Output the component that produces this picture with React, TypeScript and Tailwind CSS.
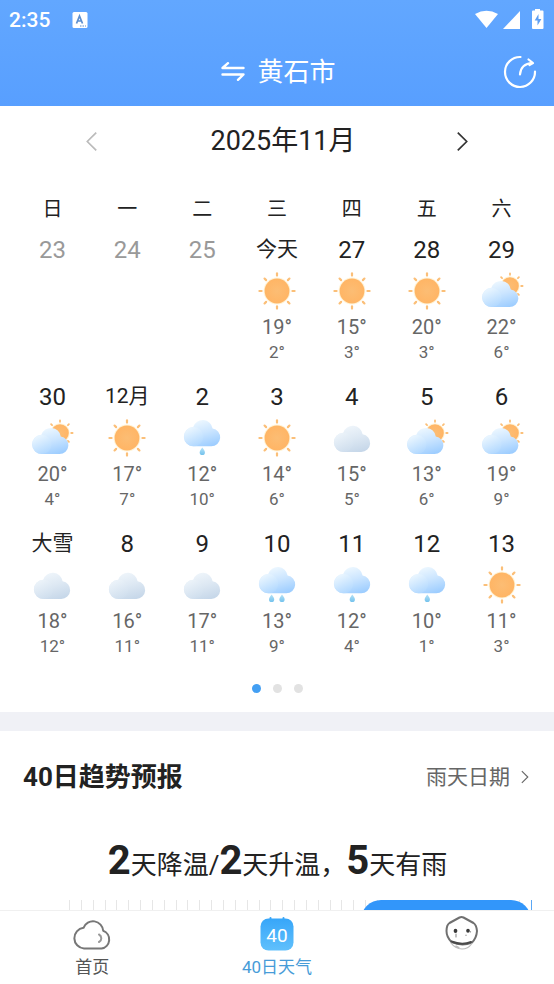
import { useState } from "react";

type Weather = "sunny" | "partly" | "cloudy" | "rain" | "heavyRain";

interface Day {
  label: string;
  small?: boolean;
  weather?: Weather;
  high?: number;
  low?: number;
}

const weekdays = ["日", "一", "二", "三", "四", "五", "六"];

const days: Day[] = [
  { label: "23" },
  { label: "24" },
  { label: "25" },
  { label: "今天", small: true, weather: "sunny", high: 19, low: 2 },
  { label: "27", weather: "sunny", high: 15, low: 3 },
  { label: "28", weather: "sunny", high: 20, low: 3 },
  { label: "29", weather: "partly", high: 22, low: 6 },
  { label: "30", weather: "partly", high: 20, low: 4 },
  { label: "12月", small: true, weather: "sunny", high: 17, low: 7 },
  { label: "2", weather: "rain", high: 12, low: 10 },
  { label: "3", weather: "sunny", high: 14, low: 6 },
  { label: "4", weather: "cloudy", high: 15, low: 5 },
  { label: "5", weather: "partly", high: 13, low: 6 },
  { label: "6", weather: "partly", high: 19, low: 9 },
  { label: "大雪", small: true, weather: "cloudy", high: 18, low: 12 },
  { label: "8", weather: "cloudy", high: 16, low: 11 },
  { label: "9", weather: "cloudy", high: 17, low: 11 },
  { label: "10", weather: "heavyRain", high: 13, low: 9 },
  { label: "11", weather: "rain", high: 12, low: 4 },
  { label: "12", weather: "rain", high: 10, low: 1 },
  { label: "13", weather: "sunny", high: 11, low: 3 },
];

const weeks = [days.slice(0, 7), days.slice(7, 14), days.slice(14, 21)];

function Gradients() {
  return (
    <svg width="0" height="0" className="absolute" aria-hidden="true">
      <defs>
        <radialGradient id="sun">
          <stop offset="0" stopColor="#fcbd74" />
          <stop offset="1" stopColor="#ffb565" />
        </radialGradient>
        <linearGradient id="blue" x1="0.3" y1="0" x2="0.7" y2="1">
          <stop offset="0" stopColor="#f0f9ff" />
          <stop offset="0.5" stopColor="#cbe5ff" />
          <stop offset="1" stopColor="#9dcdff" />
        </linearGradient>
        <linearGradient id="bluePuff" x1="0.1" y1="0" x2="0.6" y2="1">
          <stop offset="0" stopColor="#f2faff" />
          <stop offset="1" stopColor="#b4daff" stopOpacity="0.7" />
        </linearGradient>
        <linearGradient id="gray" x1="0.3" y1="0" x2="0.7" y2="1">
          <stop offset="0" stopColor="#f0f6fb" />
          <stop offset="0.5" stopColor="#dde8f3" />
          <stop offset="1" stopColor="#c6d7e9" />
        </linearGradient>
        <linearGradient id="grayPuff" x1="0.1" y1="0" x2="0.6" y2="1">
          <stop offset="0" stopColor="#f0f6fb" />
          <stop offset="1" stopColor="#d0dfee" stopOpacity="0.7" />
        </linearGradient>
        <linearGradient id="drop" x1="0" y1="0" x2="0" y2="1">
          <stop offset="0" stopColor="#b5e2f8" />
          <stop offset="1" stopColor="#74c2ec" />
        </linearGradient>
        <linearGradient id="badge" x1="0" y1="0" x2="0" y2="1">
          <stop offset="0" stopColor="#37a6f9" />
          <stop offset="1" stopColor="#60c0fc" />
        </linearGradient>
      </defs>
    </svg>
  );
}

interface SunProps {
  cx: number;
  cy: number;
  r: number;
  inner: number;
  outer: number;
  width: number;
}

function Sun({ cx, cy, r, inner, outer, width }: SunProps) {
  return (
    <g>
      <circle cx={cx} cy={cy} r={r + 1} fill="#fff3d6" />
      <circle cx={cx} cy={cy} r={r} fill="url(#sun)" />
      {[0, 45, 90, 135, 180, 225, 270, 315].map((a) => (
        <line key={a} x1={cx + inner} x2={cx + outer} y1={cy} y2={cy} stroke="#fbbf78" strokeWidth={width} strokeLinecap="round" transform={`rotate(${a} ${cx} ${cy})`} />
      ))}
    </g>
  );
}

function Cloud({ x, y, tone }: { x: number; y: number; tone: "blue" | "gray" }) {
  return (
    <g transform={`translate(${x} ${y})`}>
      <path d="M9.8 26.500A9.600 9.600 0 0 1 9.200 7.200A10 10 0 0 1 28.600 8.800A8.900 8.900 0 0 1 27.300 26.500Z" fill={tone === "blue" ? "url(#blue)" : "url(#gray)"} />
      <circle cx="9.7" cy="16.9" r="9.6" fill={tone === "blue" ? "url(#bluePuff)" : "url(#grayPuff)"} />
    </g>
  );
}

function Drop({ x }: { x: number }) {
  return <path d={`M${x} 29.5C${x + 1.6} 31.6 ${x + 2.6} 33 ${x + 2.6} 34.4A2.6 2.6 0 0 1 ${x - 2.6} 34.4C${x - 2.6} 33 ${x - 1.6} 31.6 ${x} 29.5Z`} fill="url(#drop)" />;
}

function WeatherIcon({ kind }: { kind: Weather }) {
  return (
    <svg width="44" height="40" viewBox="0 0 44 40" aria-hidden="true">
      {kind === "sunny" && <Sun cx={22} cy={20} r={12.4} inner={15.4} outer={17.6} width={2.2} />}
      {kind === "partly" && (
        <>
          <Sun cx={30} cy={15} r={8.8} inner={11.2} outer={12.6} width={1.8} />
          <Cloud x={2.2} y={9.6} tone="blue" />
        </>
      )}
      {kind === "cloudy" && <Cloud x={4} y={7.5} tone="gray" />}
      {(kind === "rain" || kind === "heavyRain") && <Cloud x={4} y={1.8} tone="blue" />}
      {kind === "rain" && <Drop x={22.3} />}
      {kind === "heavyRain" && (
        <>
          <Drop x={16.6} />
          <Drop x={27} />
        </>
      )}
    </svg>
  );
}

function StatusBar() {
  return (
    <div className="flex h-9 items-center justify-between pr-2 pl-[9px] pt-1">
      <div className="flex items-center gap-[22px] text-[21px] leading-7 font-medium">
        <span>2:35</span>
        <svg width="16" height="16" viewBox="0 0 16 16" aria-hidden="true">
          <rect x="0.5" y="0" width="15" height="16" rx="1.5" fill="#fff" />
          <path d="M4.5 11.5L7.5 4L10.5 11.5M5.6 9H9.4" fill="none" stroke="#5c8fd0" strokeWidth="1.7" />
          <path d="M8 14h6" stroke="#5c8fd0" strokeDasharray="1.5 1" />
        </svg>
      </div>
      <svg width="72" height="22" viewBox="0 0 72 22" fill="#fff" aria-hidden="true">
        <path d="M1 5Q12.500 -1.500 24 5L12.500 19Z" />
        <path d="M46 2V20H29Z" />
        <path d="M61 0h5v1.600h2.500q1 0 1 1V19q0 1-1 1h-9.500q-1 0-1-1V2.600q0-1 1-1H61Z" />
        <path d="M64.500 5L60.700 11.500H63.500V16.500L67.400 9.900H64.500Z" fill="#5f9ff2" />
      </svg>
    </div>
  );
}

function Header() {
  return (
    <header className="h-[106px] shrink-0 bg-linear-to-b from-[#62a7ff] to-[#589fff] text-white">
      <StatusBar />
      <div className="grid grid-cols-[1fr_auto_1fr] items-center px-4">
        <span />
        <button type="button" className="flex h-[72px] items-center gap-3 pl-[3px] text-[26px] leading-9">
          <svg width="24" height="20" viewBox="0 0 24 20" fill="none" stroke="#fff" strokeWidth="2.4" strokeLinecap="round" strokeLinejoin="round" aria-hidden="true">
            <path d="M22.500 6H1.500L7 1.200M1.500 12.500H22.500L17 17.800" />
          </svg>
          <span>黄石市</span>
        </button>
        <button type="button" aria-label="分享" className="justify-self-end">
          <svg width="36" height="36" viewBox="0 0 36 36" fill="none" stroke="#fff" strokeWidth="2.2" strokeLinecap="round" strokeLinejoin="round" aria-hidden="true">
            <path d="M18.500 3A15 15 0 1 0 33 17.500" />
            <path d="M18 20.500C18.500 13.500 22 9.500 30.500 9M26.500 5.500L31 9L27.500 11" />
          </svg>
        </button>
      </div>
    </header>
  );
}

function Chevron({ direction, size }: { direction: "left" | "right"; size: number }) {
  return (
    <svg width={size} height={size} viewBox="0 0 20 20" fill="none" stroke="currentColor" strokeWidth="1.600" aria-hidden="true">
      <path d={direction === "left" ? "M14.500 1.500L6 10L14.500 18.500" : "M5.500 1.500L14 10L5.500 18.500"} />
    </svg>
  );
}

function DayCell({ day }: { day: Day }) {
  return (
    <div className="flex h-[147px] flex-col items-center">
      <span className={`flex h-9 items-center ${day.small ? "text-[21px]" : "text-2xl"} ${day.weather ? "text-[#222]" : "text-[#999]"}`}>{day.label}</span>
      {day.weather && (
        <>
          <span className="mt-[3px] h-10">
            <WeatherIcon kind={day.weather} />
          </span>
          <span className="mt-1 text-xl leading-6 text-[#666]">{day.high}°</span>
          <span className="text-[17px] leading-[26px] text-[#666]">{day.low}°</span>
        </>
      )}
    </div>
  );
}

function Calendar() {
  const [page, setPage] = useState(0);
  return (
    <section className="bg-white px-[15px]">
      <div className="flex h-[70px] items-center justify-between px-[66px]">
        <button type="button" aria-label="上个月" className="text-[#bbb]">
          <Chevron direction="left" size={21} />
        </button>
        <h1 className="pl-3 text-[27px] leading-9 text-[#222]">2025年11月</h1>
        <button type="button" aria-label="下个月" className="text-[#333]">
          <Chevron direction="right" size={21} />
        </button>
      </div>
      <div className="grid grid-cols-7 pt-[17px] pb-[7px] text-center text-xl leading-8 text-[#222]">
        {weekdays.map((name) => (
          <span key={name}>{name}</span>
        ))}
      </div>
      {weeks.map((week, i) => (
        <div key={i} className="grid grid-cols-7">
          {week.map((day) => (
            <DayCell key={day.label} day={day} />
          ))}
        </div>
      ))}
      <div className="flex h-[39px] justify-center gap-3 pt-[11px]">
        {[0, 1, 2].map((n) => (
          <button key={n} type="button" aria-label={`第${n + 1}页`} onClick={() => setPage(n)} className={`size-[9px] rounded-full ${n === page ? "bg-[#439ff3]" : "bg-[#e2e2e2]"}`} />
        ))}
      </div>
    </section>
  );
}

function Trend() {
  return (
    <section className="bg-white pr-[22px] pl-[23px]">
      <div className="flex h-[92px] items-center justify-between">
        <h2 className="text-[26px] leading-9 font-bold text-[#222]">40日趋势预报</h2>
        <a href="#rain" className="flex items-center gap-2 text-[21px] leading-8 text-[#666]">
          雨天日期
          <Chevron direction="right" size={14} />
        </a>
      </div>
      <p className="flex h-[77px] items-baseline justify-center pt-3 text-[26px] leading-[52px] text-[#222]">
        <b className="text-[40px]">2</b>天降温/<b className="text-[40px]">2</b>天升温，<b className="text-[40px]">5</b>天有雨
      </p>
      <div className="relative ml-[46px] flex h-48 justify-between">
        {Array.from({ length: 40 }, (_, i) => (
          <span key={i} className={`w-px ${i === 39 ? "bg-[#5aa7f5]" : "bg-[#e6e6e6]"}`} />
        ))}
        <div className="absolute top-0 right-px h-11 w-[170px] rounded-[20px] bg-[#3296fa]" />
      </div>
    </section>
  );
}

function TabBar() {
  return (
    <nav className="grid h-[74px] shrink-0 grid-cols-3 border-t border-[#f0f0f0] bg-white text-[17px] leading-6 text-[#555]">
      <a href="#home" className="flex flex-col items-center pt-1">
        <svg width="40" height="40" viewBox="0 0 40 40" fill="none" strokeWidth="2" strokeLinecap="round" strokeLinejoin="round" aria-hidden="true">
          <path d="M12 33.500A10.400 10.400 0 0 1 11.500 12.800A10.200 10.200 0 0 1 31.200 15.800A9.200 9.200 0 0 1 29.500 33.500Z" stroke="#777" />
          <path d="M27 19.500A4.200 4.200 0 0 1 27 27" stroke="#999" />
        </svg>
        首页
      </a>
      <a href="#forty" className="flex flex-col items-center pt-1 text-[#479cd8]">
        <svg width="40" height="40" viewBox="0 0 40 40" aria-hidden="true">
          <path d="M13.500 3v4M26.500 3v4" stroke="#37a6f9" strokeWidth="2" strokeLinecap="round" />
          <rect x="3.500" y="3.500" width="33" height="32" rx="8" fill="url(#badge)" />
          <text x="20" y="26.500" textAnchor="middle" fontSize="19" fill="#fff">40</text>
        </svg>
        40日天气
      </a>
      <a href="#me" aria-label="我的" className="flex flex-col items-center pt-1">
        <svg width="40" height="40" viewBox="0 0 40 40" fill="none" strokeLinecap="round" strokeLinejoin="round" aria-hidden="true">
          <path d="M17.500 2.500Q19.500 1.500 21.500 2.500L31.500 8Q34.500 10 35 16Q34.500 23 30 27.500Q20 31.500 9.500 27Q4.500 22 4.500 16Q4.500 10 7.500 8Z" stroke="#707070" strokeWidth="2" />
          <path d="M9.500 26.500Q20 30.500 29 27" stroke="#4a4a4a" strokeWidth="2" />
          <path d="M9 28Q13 33.500 20 34Q26 34 29.500 29M14 31l3 1.500M19 34h3" stroke="#bbb" strokeWidth="1.200" />
          <path d="M13.500 15.500v.8M26 15.500v.5" stroke="#3a3a3a" strokeWidth="3.600" />
          <path d="M14 19v3M28.500 16.500v.5M24 20v.5" stroke="#999" strokeWidth="1.200" />
        </svg>
      </a>
    </nav>
  );
}

export default function App() {
  return (
    <div className="flex h-dvh flex-col overflow-hidden bg-white font-[Roboto,'Noto_Sans_CJK_SC',sans-serif]">
      <Gradients />
      <Header />
      <main className="min-h-0 flex-1 overflow-y-auto bg-[#f0f1f6] [scrollbar-width:none]">
        <Calendar />
        <div className="h-[19px]" />
        <Trend />
      </main>
      <TabBar />
    </div>
  );
}
